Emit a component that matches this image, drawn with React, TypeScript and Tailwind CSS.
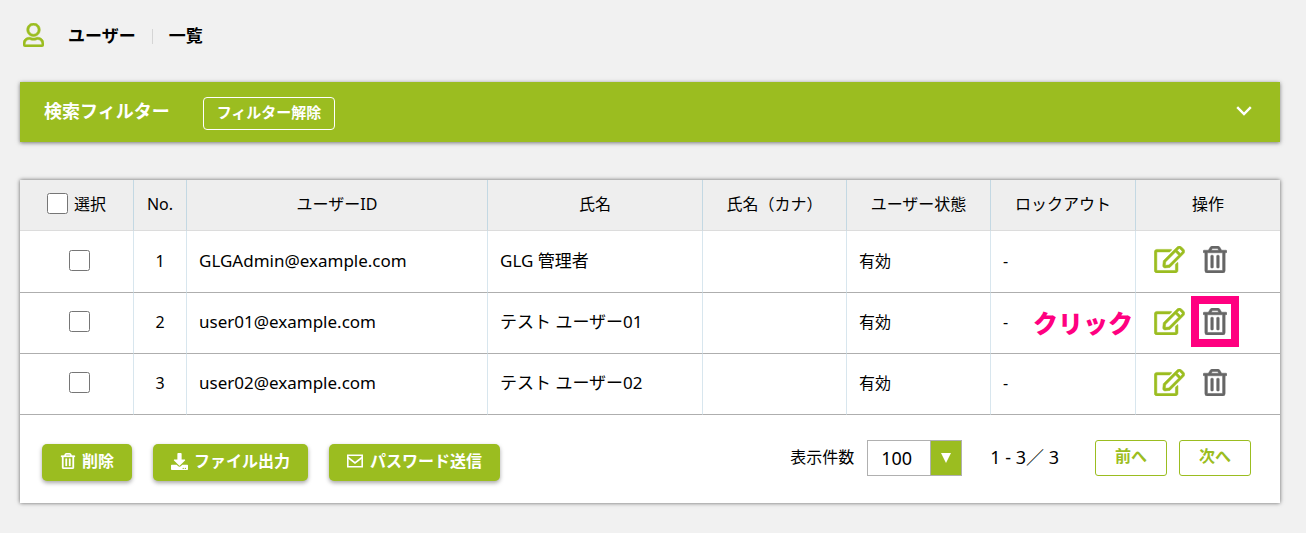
import { useState } from "react"
import { FaDownload, FaRegEdit, FaRegTrashAlt, FaRegUser } from "react-icons/fa"

const users = [
  { id: 1, account: "GLGAdmin@example.com", name: "GLG 管理者", kana: "", status: "有効", lockout: "-" },
  { id: 2, account: "user01@example.com", name: "テスト ユーザー01", kana: "", status: "有効", lockout: "-" },
  { id: 3, account: "user02@example.com", name: "テスト ユーザー02", kana: "", status: "有効", lockout: "-" },
]

// row whose delete button is pointed out
const GUIDE_ROW = 2

const headCell = "border-b border-[#dcdcdc] border-l border-l-[#c3d8e3] pb-0.5 font-normal"
const bodyCell = "border-b border-[#aeaeae] border-l border-l-[#d8e6ee] px-3 pb-0.5"
const actionButton =
  "flex h-[37px] items-center gap-1.5 rounded-[5px] bg-[#9bbd20] px-[18px] pb-[3px] font-bold text-white shadow-[0_2px_4px_rgba(0,0,0,0.35)]"
const pagerButton = "h-9 w-[72px] rounded-[3px] border border-[#9bbd20] bg-white pb-1 font-bold text-[#9bbd20]"

function MailIcon() {
  return (
    <svg viewBox="0 0 16 16" className="mr-px size-4" fill="none" stroke="currentColor" strokeWidth="1.6">
      <path d="M.8 2.300h14.400v11.400H.8z" />
      <path d="M1 4.500 8 10l7-5.500" />
    </svg>
  )
}

export default function App() {
  const [selected, setSelected] = useState<number[]>([])
  const allSelected = selected.length === users.length

  const toggle = (id: number) =>
    setSelected((prev) => (prev.includes(id) ? prev.filter((x) => x !== id) : [...prev, id]))

  return (
    <div
      lang="ja"
      className="min-h-screen bg-[#f1f1f1] pr-[26px] pb-[30px] pl-5 font-['Noto_Sans','Noto_Sans_CJK_JP',sans-serif] text-base leading-6 text-black"
    >
      {/* Page title */}
      <header className="flex h-[82px] items-center pb-3 pl-[3px]">
        <FaRegUser className="h-6 w-[21px] stroke-[12] text-[#9bbd20]" />
        <h1 className="ml-6 flex items-center pt-0.5 text-[17px] font-bold">
          <span>ユーザー</span>
          <span className="mx-4 h-[15px] w-px bg-[#d5d5d5]" />
          <span>一覧</span>
        </h1>
      </header>

      {/* Search filter */}
      <section className="flex h-[60px] items-center bg-[#9bbd20] pr-7 pb-0.5 pl-6 text-white shadow-[0_1px_4px_rgba(0,0,0,0.5)]">
        <h2 className="text-[18px] font-bold">検索フィルター</h2>
        <button className="mt-1 ml-[33px] h-[33px] rounded-[4px] border border-white px-[13px] pb-0.5 text-[15px] font-bold">
          フィルター解除
        </button>
        <button aria-label="開く" className="ml-auto">
          <svg viewBox="0 0 16 10" className="h-2.5 w-4" fill="none" stroke="currentColor" strokeWidth="2.4">
            <path d="M1.2 1.2 8 8l6.800-6.800" />
          </svg>
        </button>
      </section>

      {/* User list */}
      <section className="mt-[38px] bg-white shadow-[0_0_4px_rgba(0,0,0,0.6)]">
        <table className="w-full table-fixed border-separate border-spacing-0">
          <colgroup>
            <col className="w-[113px]" />
            <col className="w-[53px]" />
            <col />
            <col className="w-[215px]" />
            <col className="w-[144px]" />
            <col className="w-[144px]" />
            <col className="w-[145px]" />
            <col className="w-[145px]" />
          </colgroup>
          <thead className="bg-[#eeeeee]">
            <tr className="h-[51px]">
              <th className="border-b border-[#dcdcdc] pb-[3px] font-normal">
                <label className="flex items-center justify-center gap-1.5">
                  <input
                    type="checkbox"
                    className="size-[21px]"
                    checked={allSelected}
                    onChange={() => setSelected(allSelected ? [] : users.map((u) => u.id))}
                  />
                  選択
                </label>
              </th>
              <th className={headCell}>No.</th>
              <th className={headCell}>ユーザーID</th>
              <th className={headCell}>氏名</th>
              <th className={headCell}>氏名（カナ）</th>
              <th className={headCell}>ユーザー状態</th>
              <th className={headCell}>ロックアウト</th>
              <th className={headCell}>操作</th>
            </tr>
          </thead>
          <tbody>
            {users.map((user) => (
              <tr key={user.id} className="h-[61px] first:h-[62px]">
                <td className="border-b border-[#aeaeae] pb-1.5 pl-1.5 text-center">
                  <input
                    type="checkbox"
                    aria-label={user.account}
                    className="size-[21px] align-middle"
                    checked={selected.includes(user.id)}
                    onChange={() => toggle(user.id)}
                  />
                </td>
                <td className={`${bodyCell} text-center`}>{user.id}</td>
                <td className={`${bodyCell} text-[17px]`}>{user.account}</td>
                <td className={`${bodyCell} text-[17px]`}>{user.name}</td>
                <td className={bodyCell}>{user.kana}</td>
                <td className={bodyCell}>{user.status}</td>
                <td className={bodyCell}>{user.lockout}</td>
                <td className="border-b border-[#aeaeae] border-l border-l-[#d8e6ee] pb-1 pl-[18px]">
                  <div className="flex items-center gap-[18px]">
                    <button aria-label="編集" className="text-[#9bbd20]">
                      <FaRegEdit className="h-[27px] w-[31px] stroke-[10]" />
                    </button>
                    <div className="relative">
                      <button aria-label="削除" className="block text-[#666666]">
                        <FaRegTrashAlt className="h-[27px] w-6 stroke-[10]" />
                      </button>
                      {user.id === GUIDE_ROW && (
                        <>
                          <span className="pointer-events-none absolute -inset-3 border-8 border-[#ff0080]" />
                          <span className="pointer-events-none absolute -top-0.5 right-full mr-[70px] text-[25px] leading-[34px] font-black whitespace-nowrap text-[#ff0080]">
                            クリック
                          </span>
                        </>
                      )}
                    </div>
                  </div>
                </td>
              </tr>
            ))}
          </tbody>
        </table>

        {/* Actions and paging */}
        <div className="flex items-start pt-[25px] pr-[29px] pb-[21px] pl-[22px]">
          <div className="flex gap-[21px] pt-1 pb-px">
            <button className={actionButton}>
              <FaRegTrashAlt className="size-4 stroke-[10]" />
              削除
            </button>
            <button className={actionButton}>
              <FaDownload className="size-[17px]" />
              ファイル出力
            </button>
            <button className={actionButton}>
              <MailIcon />
              パスワード送信
            </button>
          </div>

          <div className="ml-auto flex items-center">
            <label htmlFor="page-size" className="pb-0.5">
              表示件数
            </label>
            <div className="relative ml-[13px]">
              <select
                id="page-size"
                defaultValue="100"
                className="h-9 w-[95px] appearance-none border border-[#b0b0b0] bg-white pl-[13px] text-[18px]"
              >
                <option>20</option>
                <option>50</option>
                <option>100</option>
              </select>
              <span className="pointer-events-none absolute inset-y-px right-px flex w-[31px] items-center justify-center border-l border-[#b0b0b0] bg-[#9bbd20]">
                <svg viewBox="0 0 10 10" className="size-2.5 fill-white">
                  <path d="M0 0h10L5 10z" />
                </svg>
              </span>
            </div>
            <span className="ml-7 pb-0.5 text-[18px]">1 - 3／ 3</span>
            <button className={`${pagerButton} ml-9`}>前へ</button>
            <button className={`${pagerButton} ml-3`}>次へ</button>
          </div>
        </div>
      </section>
    </div>
  )
}
